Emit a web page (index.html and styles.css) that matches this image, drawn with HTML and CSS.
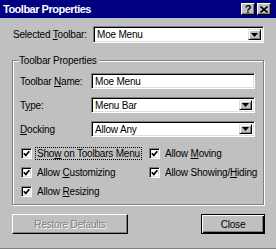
FILE: index.html
```html
<!DOCTYPE html>
<html>
<head>
<meta charset="utf-8">
<title>Toolbar Properties</title>
<link rel="stylesheet" href="styles.css">
</head>
<body>
<div class="window">
  <div class="titlebar">
    <span class="title">Toolbar Properties</span>
    <div class="caption-buttons">
      <span class="cbtn help">?</span>
      <span class="cbtn">
        <svg width="8" height="7" viewBox="0 0 8 7"><path d="M0.5 0.5 L7.5 6.5 M7.5 0.5 L0.5 6.5" stroke="#000" stroke-width="1.6" fill="none"/></svg>
      </span>
    </div>
  </div>
  <div class="client">
    <div class="selected-row">
      <span class="label">Selected <u>T</u>oolbar:</span>
      <div class="combo tall">
        <span class="combo-text">Moe Menu</span>
        <span class="drop"><svg width="7" height="4" viewBox="0 0 7 4"><path d="M0 0 H7 L3.5 4 Z" fill="#000"/></svg></span>
      </div>
    </div>
    <div class="group">
      <span class="legend">Toolbar Properties</span>
      <div class="form">
        <span class="label">Toolbar <u>N</u>ame:</span>
        <div class="edit">Moe Menu</div>
        <span class="label">T<u>y</u>pe:</span>
        <div class="combo">
          <span class="combo-text">Menu Bar</span>
          <span class="drop"><svg width="7" height="4" viewBox="0 0 7 4"><path d="M0 0 H7 L3.5 4 Z" fill="#000"/></svg></span>
        </div>
        <span class="label"><u>D</u>ocking</span>
        <div class="combo">
          <span class="combo-text">Allow Any</span>
          <span class="drop"><svg width="7" height="4" viewBox="0 0 7 4"><path d="M0 0 H7 L3.5 4 Z" fill="#000"/></svg></span>
        </div>
      </div>
      <div class="checks">
        <div class="check"><span class="box"><svg width="7" height="7" viewBox="0 0 7 7"><path d="M0.8 3.2 L2.8 5.4 L6.3 1.2" stroke="#000" stroke-width="1.7" fill="none"/></svg></span><span class="ctext focus">Sho<u>w</u> on Toolbars Menu</span></div>
        <div class="check"><span class="box"><svg width="7" height="7" viewBox="0 0 7 7"><path d="M0.8 3.2 L2.8 5.4 L6.3 1.2" stroke="#000" stroke-width="1.7" fill="none"/></svg></span><span class="ctext">Allow <u>M</u>oving</span></div>
        <div class="check"><span class="box"><svg width="7" height="7" viewBox="0 0 7 7"><path d="M0.8 3.2 L2.8 5.4 L6.3 1.2" stroke="#000" stroke-width="1.7" fill="none"/></svg></span><span class="ctext">Allow <u>C</u>ustomizing</span></div>
        <div class="check"><span class="box"><svg width="7" height="7" viewBox="0 0 7 7"><path d="M0.8 3.2 L2.8 5.4 L6.3 1.2" stroke="#000" stroke-width="1.7" fill="none"/></svg></span><span class="ctext">Allow Showing/<u>H</u>iding</span></div>
        <div class="check"><span class="box"><svg width="7" height="7" viewBox="0 0 7 7"><path d="M0.8 3.2 L2.8 5.4 L6.3 1.2" stroke="#000" stroke-width="1.7" fill="none"/></svg></span><span class="ctext">Allow <u>R</u>esizing</span></div>
      </div>
    </div>
    <div class="actions">
      <div class="btn disabled">Restore Defaults</div>
      <div class="btn default">Close</div>
    </div>
  </div>
</div>
</body>
</html>
```
FILE: styles.css
```css
* { box-sizing: border-box; }
html, body { margin: 0; padding: 0; }
body {
  width: 276px;
  height: 249px;
  background: #c0c0c0;
  font-family: "Liberation Sans", Arial, sans-serif;
  font-size: 10px;
  letter-spacing: -0.2px;
  color: #000;
  overflow: hidden;
}
.window {
  width: 276px;
  height: 249px;
  display: flex;
  flex-direction: column;
  border-bottom: 1px solid #808080;
}
.titlebar {
  height: 18px;
  flex: none;
  background: #000080;
  display: flex;
  align-items: center;
  justify-content: space-between;
  padding: 0 5px 0 3px;
}
.title {
  color: #fff;
  font-weight: bold;
  font-size: 11px;
  letter-spacing: -0.5px;
}
.caption-buttons { display: flex; gap: 2px; }
.cbtn {
  width: 14px;
  height: 12px;
  background: #c0c0c0;
  border-top: 1px solid #fff;
  border-left: 1px solid #fff;
  border-right: 1px solid #000;
  border-bottom: 1px solid #000;
  box-shadow: inset -1px -1px 0 #808080;
  display: flex;
  align-items: center;
  justify-content: center;
  font-weight: bold;
  font-size: 11px;
  line-height: 1;
  letter-spacing: 0;
}
.client {
  flex: 1;
  padding: 8px 11px 0 12px;
}
.selected-row {
  display: grid;
  grid-template-columns: 80px 171px;
  align-items: center;
  padding-left: 1px;
}
.label { white-space: nowrap; }
.edit, .combo {
  background: #fff;
  border-top: 1px solid #808080;
  border-left: 1px solid #808080;
  border-right: 1px solid #fff;
  border-bottom: 1px solid #fff;
  box-shadow: inset 1px 1px 0 #000, inset -1px -1px 0 #dfdfdf;
  height: 16px;
  display: flex;
  align-items: center;
  padding: 0 2px 0 3px;
  white-space: nowrap;
}
.combo { justify-content: space-between; padding: 2px 2px 2px 3px; }
.combo.tall { height: 17px; }
.drop {
  width: 13px;
  height: 100%;
  background: #c0c0c0;
  border-top: 1px solid #dfdfdf;
  border-left: 1px solid #dfdfdf;
  border-right: 1px solid #000;
  border-bottom: 1px solid #000;
  box-shadow: inset 1px 1px 0 #fff, inset -1px -1px 0 #808080;
  display: flex;
  align-items: center;
  justify-content: center;
}
.group {
  margin-top: 17px;
  width: 252px;
  border: 1px solid #808080;
  box-shadow: inset 1px 1px 0 #fff, 1px 1px 0 #fff;
  padding: 0 8px 6px 7px;
}
.legend {
  display: inline-block;
  background: #c0c0c0;
  margin: -7px 0 0 -2px;
  padding: 0 2px 0 1px;
  line-height: 13px;
  height: 13px;
  vertical-align: top;
}
.form {
  margin-top: 1px;
  display: grid;
  grid-template-columns: 71px 164px;
  grid-auto-rows: 16px;
  row-gap: 8px;
  align-items: center;
}
.checks {
  margin-top: 10px;
  display: grid;
  grid-template-columns: 128px 1fr;
  grid-auto-rows: 13px;
  row-gap: 6px;
  padding-left: 1px;
}
.check { display: flex; align-items: center; white-space: nowrap; }
.box {
  width: 11px;
  height: 11px;
  flex: none;
  background: #fff;
  border-top: 1px solid #808080;
  border-left: 1px solid #808080;
  border-right: 1px solid #fff;
  border-bottom: 1px solid #fff;
  box-shadow: inset 1px 1px 0 #000, inset -1px -1px 0 #dfdfdf;
  display: flex;
  align-items: center;
  justify-content: center;
  margin-right: 4px;
}
.ctext { line-height: 11px; padding: 0 1px; }
.focus { outline: 1px dotted #000; outline-offset: 0; }
.actions {
  margin-top: 9px;
  display: flex;
  justify-content: space-between;
  width: 253px;
}
.btn {
  height: 20px;
  display: flex;
  align-items: center;
  justify-content: center;
  background: #c0c0c0;
  border-top: 1px solid #fff;
  border-left: 1px solid #fff;
  border-right: 1px solid #000;
  border-bottom: 1px solid #000;
  box-shadow: inset -1px -1px 0 #808080;
}
.btn.disabled {
  width: 116px;
  color: #808080;
  text-shadow: 1px 1px 0 #fff;
}
.btn.default {
  width: 64px;
  border: 1px solid #000;
  box-shadow: inset 1px 1px 0 #fff, inset -1px -1px 0 #000, inset -2px -2px 0 #808080;
}
```
